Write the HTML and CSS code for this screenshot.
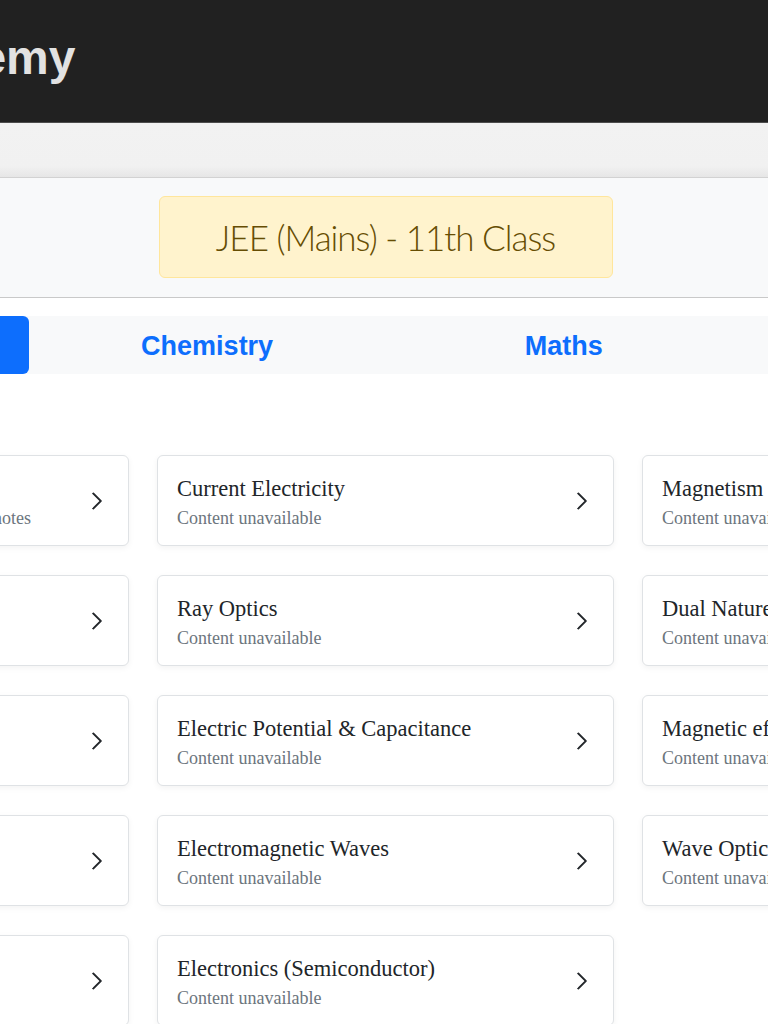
FILE: index.html
```html
<!DOCTYPE html>
<html lang="en">
<head>
<meta charset="utf-8">
<title>Academy - JEE (Mains) 11th Class</title>
<link rel="stylesheet" href="styles.css">
</head>
<body>
<div class="page">
  <header class="site-header">
    <h1 class="brand">Academy</h1>
  </header>
  <div class="subbar"></div>
  <section class="hero">
    <div class="badge">JEE (Mains) - 11th Class</div>
  </section>
  <main class="container">
    <nav class="tabs">
      <a class="tab active">Physics</a>
      <a class="tab">Chemistry</a>
      <a class="tab">Maths</a>
      <a class="tab">Biology</a>
    </nav>
    <div class="grid">
      <a class="card"><div class="card-text"><div class="card-title">Electric Charges</div><div class="card-sub">Click to open completed chapter revision notes</div></div><svg class="chev" viewBox="0 0 16 16"><path d="M4.646 1.646a.5.5 0 0 1 .708 0l6 6a.5.5 0 0 1 0 .708l-6 6a.5.5 0 0 1-.708-.708L10.293 8 4.646 2.354a.5.5 0 0 1 0-.708z"/></svg></a>
      <a class="card"><div class="card-text"><div class="card-title">Current Electricity</div><div class="card-sub">Content unavailable</div></div><svg class="chev" viewBox="0 0 16 16"><path d="M4.646 1.646a.5.5 0 0 1 .708 0l6 6a.5.5 0 0 1 0 .708l-6 6a.5.5 0 0 1-.708-.708L10.293 8 4.646 2.354a.5.5 0 0 1 0-.708z"/></svg></a>
      <a class="card"><div class="card-text"><div class="card-title">Magnetism &amp; Matter</div><div class="card-sub">Content unavailable</div></div><svg class="chev" viewBox="0 0 16 16"><path d="M4.646 1.646a.5.5 0 0 1 .708 0l6 6a.5.5 0 0 1 0 .708l-6 6a.5.5 0 0 1-.708-.708L10.293 8 4.646 2.354a.5.5 0 0 1 0-.708z"/></svg></a>

      <a class="card"><div class="card-text"><div class="card-title">Electrostatics</div><div class="card-sub">Content unavailable</div></div><svg class="chev" viewBox="0 0 16 16"><path d="M4.646 1.646a.5.5 0 0 1 .708 0l6 6a.5.5 0 0 1 0 .708l-6 6a.5.5 0 0 1-.708-.708L10.293 8 4.646 2.354a.5.5 0 0 1 0-.708z"/></svg></a>
      <a class="card"><div class="card-text"><div class="card-title">Ray Optics</div><div class="card-sub">Content unavailable</div></div><svg class="chev" viewBox="0 0 16 16"><path d="M4.646 1.646a.5.5 0 0 1 .708 0l6 6a.5.5 0 0 1 0 .708l-6 6a.5.5 0 0 1-.708-.708L10.293 8 4.646 2.354a.5.5 0 0 1 0-.708z"/></svg></a>
      <a class="card"><div class="card-text"><div class="card-title">Dual Nature of Matter</div><div class="card-sub">Content unavailable</div></div><svg class="chev" viewBox="0 0 16 16"><path d="M4.646 1.646a.5.5 0 0 1 .708 0l6 6a.5.5 0 0 1 0 .708l-6 6a.5.5 0 0 1-.708-.708L10.293 8 4.646 2.354a.5.5 0 0 1 0-.708z"/></svg></a>

      <a class="card"><div class="card-text"><div class="card-title">Alternating Current</div><div class="card-sub">Content unavailable</div></div><svg class="chev" viewBox="0 0 16 16"><path d="M4.646 1.646a.5.5 0 0 1 .708 0l6 6a.5.5 0 0 1 0 .708l-6 6a.5.5 0 0 1-.708-.708L10.293 8 4.646 2.354a.5.5 0 0 1 0-.708z"/></svg></a>
      <a class="card"><div class="card-text"><div class="card-title">Electric Potential &amp; Capacitance</div><div class="card-sub">Content unavailable</div></div><svg class="chev" viewBox="0 0 16 16"><path d="M4.646 1.646a.5.5 0 0 1 .708 0l6 6a.5.5 0 0 1 0 .708l-6 6a.5.5 0 0 1-.708-.708L10.293 8 4.646 2.354a.5.5 0 0 1 0-.708z"/></svg></a>
      <a class="card"><div class="card-text"><div class="card-title">Magnetic effect of Current</div><div class="card-sub">Content unavailable</div></div><svg class="chev" viewBox="0 0 16 16"><path d="M4.646 1.646a.5.5 0 0 1 .708 0l6 6a.5.5 0 0 1 0 .708l-6 6a.5.5 0 0 1-.708-.708L10.293 8 4.646 2.354a.5.5 0 0 1 0-.708z"/></svg></a>

      <a class="card"><div class="card-text"><div class="card-title">Atoms &amp; Nuclei</div><div class="card-sub">Content unavailable</div></div><svg class="chev" viewBox="0 0 16 16"><path d="M4.646 1.646a.5.5 0 0 1 .708 0l6 6a.5.5 0 0 1 0 .708l-6 6a.5.5 0 0 1-.708-.708L10.293 8 4.646 2.354a.5.5 0 0 1 0-.708z"/></svg></a>
      <a class="card"><div class="card-text"><div class="card-title">Electromagnetic Waves</div><div class="card-sub">Content unavailable</div></div><svg class="chev" viewBox="0 0 16 16"><path d="M4.646 1.646a.5.5 0 0 1 .708 0l6 6a.5.5 0 0 1 0 .708l-6 6a.5.5 0 0 1-.708-.708L10.293 8 4.646 2.354a.5.5 0 0 1 0-.708z"/></svg></a>
      <a class="card"><div class="card-text"><div class="card-title">Wave Optics</div><div class="card-sub">Content unavailable</div></div><svg class="chev" viewBox="0 0 16 16"><path d="M4.646 1.646a.5.5 0 0 1 .708 0l6 6a.5.5 0 0 1 0 .708l-6 6a.5.5 0 0 1-.708-.708L10.293 8 4.646 2.354a.5.5 0 0 1 0-.708z"/></svg></a>

      <a class="card"><div class="card-text"><div class="card-title">EM Induction</div><div class="card-sub">Content unavailable</div></div><svg class="chev" viewBox="0 0 16 16"><path d="M4.646 1.646a.5.5 0 0 1 .708 0l6 6a.5.5 0 0 1 0 .708l-6 6a.5.5 0 0 1-.708-.708L10.293 8 4.646 2.354a.5.5 0 0 1 0-.708z"/></svg></a>
      <a class="card"><div class="card-text"><div class="card-title">Electronics (Semiconductor)</div><div class="card-sub">Content unavailable</div></div><svg class="chev" viewBox="0 0 16 16"><path d="M4.646 1.646a.5.5 0 0 1 .708 0l6 6a.5.5 0 0 1 0 .708l-6 6a.5.5 0 0 1-.708-.708L10.293 8 4.646 2.354a.5.5 0 0 1 0-.708z"/></svg></a>
    </div>
  </main>
</div>
</body>
</html>
```

FILE: styles.css
```css
html, body {
  margin: 0;
  padding: 0;
  background: #ffffff;
  overflow: hidden;
}

body {
  font-family: "Liberation Serif", "Times New Roman", serif;
  color: #212529;
}

.page {
  width: 1427px;
  margin-left: -328px;
}

.site-header {
  box-sizing: border-box;
  height: 123px;
  padding: 30px 0 0 190px;
  background: #212121;
  border-bottom: 1px solid #4d4d4d;
}

.brand {
  margin: 0;
  font-family: "Liberation Sans", Arial, sans-serif;
  font-weight: 700;
  font-size: 48px;
  line-height: 56px;
  color: #e2e2e2;
}

.subbar {
  height: 54px;
  background: linear-gradient(#f2f2f2 0%, #f1f1f1 80%, #e6e6e6 100%);
  border-bottom: 1px solid #d2d2d2;
}

.hero {
  display: flex;
  justify-content: center;
  padding: 18px 0 19px;
  background: #f8f9fa;
  border-bottom: 1px solid #c9c9c9;
}

.badge {
  box-sizing: border-box;
  width: 454px;
  height: 82px;
  display: flex;
  align-items: center;
  justify-content: center;
  background: #fff3cd;
  border: 1px solid #ffe69c;
  border-radius: 6px;
  color: #664d03;
  font-family: "Lato", "Open Sans", sans-serif;
  font-weight: 300;
  font-size: 35px;
  letter-spacing: -1px;
}

.container {
  padding-top: 18px;
}

.tabs {
  display: flex;
  height: 58px;
  background: #f8f9fa;
}

.tab {
  flex: 1;
  display: flex;
  align-items: center;
  justify-content: center;
  padding-top: 2px;
  border-radius: 6px;
  font-family: "Liberation Sans", Arial, sans-serif;
  font-weight: 700;
  font-size: 27px;
  color: #0d6efd;
}

.tab.active {
  background: #0d6efd;
  color: #ffffff;
}

.grid {
  display: grid;
  grid-template-columns: repeat(3, 1fr);
  column-gap: 28px;
  row-gap: 29px;
  margin-top: 81px;
}

.card {
  display: flex;
  align-items: center;
  justify-content: space-between;
  height: 91px;
  box-sizing: border-box;
  padding: 3px 21px 0 19px;
  background: #ffffff;
  border: 1px solid #dfe2e5;
  border-radius: 6px;
  box-shadow: 0 2px 6px rgba(0, 0, 0, 0.05);
  color: #212529;
}

.card-text {
  display: flex;
  flex-direction: column;
  gap: 6px;
  white-space: nowrap;
}

.card-title {
  font-size: 22.5px;
  line-height: 27px;
  color: #212529;
}

.card-sub {
  font-size: 18px;
  line-height: 21px;
  color: #6c757d;
}

.chev {
  width: 20px;
  height: 20px;
  flex: none;
  margin-top: -3px;
  fill: #212529;
  stroke: #212529;
  stroke-width: 0.7;
}
```
